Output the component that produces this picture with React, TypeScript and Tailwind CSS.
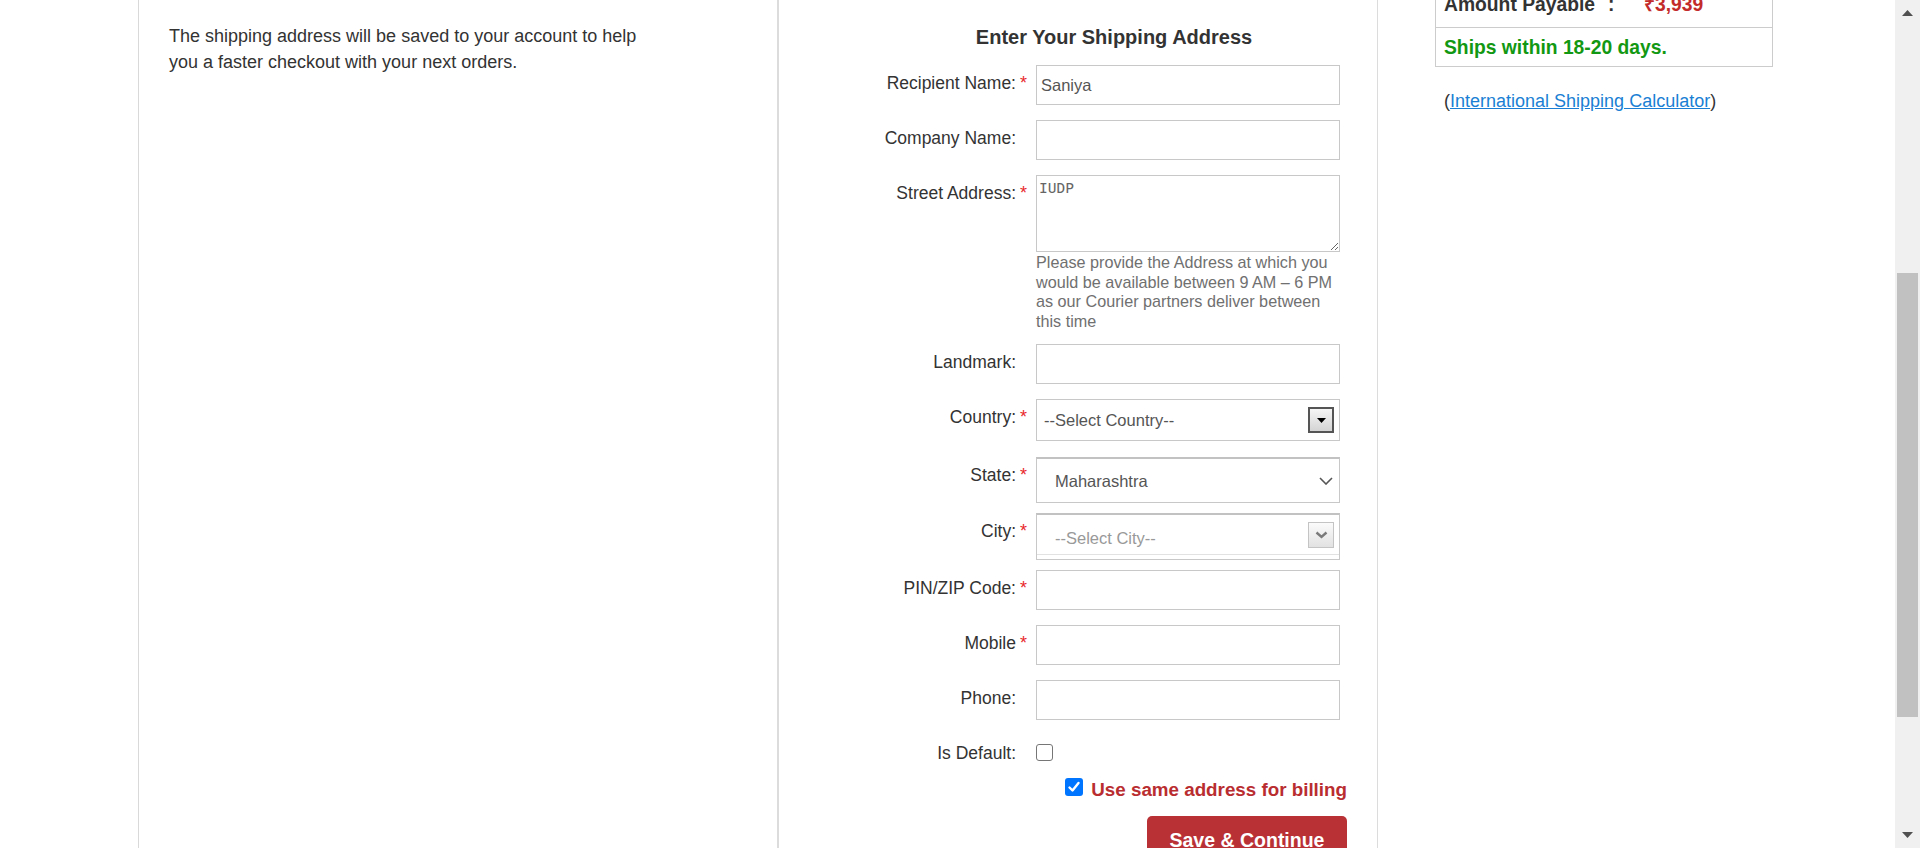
import React from "react";

const Req = () => (
  <span className="text-[#e8282b] text-[18px] leading-[22px]">*</span>
);

function Label({ text, req }: { text: string; req?: boolean }) {
  return (
    <>
      <div className="w-[135px] shrink-0 text-right pt-[7px] text-[17.5px] leading-[22px] text-[#333]">
        {text}
      </div>
      <div className="w-[20px] shrink-0 pl-[4px] pt-[7px] leading-[22px]">{req ? <Req /> : null}</div>
    </>
  );
}

function TextRow({ label, req, mt, value }: { label: string; req?: boolean; mt: string; value?: string }) {
  return (
    <div className={`flex ${mt}`}>
      <Label text={label} req={req} />
      <input
        defaultValue={value}
        className="h-[40px] w-[304px] border border-[#c8c8c8] bg-white px-[4px] text-[16.5px] text-[#555] outline-none font-['Liberation_Sans',Arial,sans-serif]"
      />
    </div>
  );
}

function Checkbox({ checked }: { checked?: boolean }) {
  if (checked) {
    return (
      <div className="w-[18px] h-[18px] rounded-[3px] bg-[#0075ff] flex items-center justify-center shrink-0">
        <svg width="14" height="14" viewBox="0 0 14 14">
          <path d="M2.5 7.5 L5.5 10.5 L11.5 3" fill="none" stroke="#fff" strokeWidth="2.4" strokeLinecap="round" strokeLinejoin="round" />
        </svg>
      </div>
    );
  }
  return <div className="w-[17px] h-[17px] rounded-[3px] border-[1.5px] border-[#767676] bg-white shrink-0" />;
}

export default function App() {
  return (
    <div className="w-[1920px] h-[848px] overflow-hidden bg-white flex font-['Liberation_Sans',Arial,sans-serif] text-[#333]">
      <div className="flex flex-1 h-full">
        <div className="w-[138px] shrink-0" />
        {/* left panel */}
        <div className="w-[639px] shrink-0 h-full border-l border-[#d9d9d9] pl-[30px] pt-[23px]">
          <p className="text-[18px] leading-[26px] text-[#333] whitespace-nowrap">
            The shipping address will be saved to your account to help
            <br />
            you a faster checkout with your next orders.
          </p>
        </div>
        {/* middle panel */}
        <div className="w-[601px] shrink-0 h-full border-l-2 border-r border-[#dcdcdc]">
          <div className="ml-[102px] w-[466px] flex flex-col">
            <h2 className="pt-[25px] text-center text-[20px] leading-[24px] font-bold text-[#333]">
              Enter Your Shipping Address
            </h2>
            <TextRow label="Recipient Name:" req mt="mt-[16px]" value="Saniya" />
            <TextRow label="Company Name:" mt="mt-[15px]" />
            <div className="flex mt-[15px]">
              <Label text="Street Address:" req />
              <div className="w-[304px] flex flex-col">
                <textarea
                  defaultValue="IUDP"
                  className="h-[77px] w-[304px] border border-[#c8c8c8] bg-white px-[2px] py-[3px] font-['DejaVu_Sans_Mono',monospace] text-[14.5px] leading-[18px] text-[#666] outline-none"
                />
                <div className="h-[78px] pt-[1px] text-[16.2px] leading-[19.5px] text-[#707070] whitespace-nowrap">
                  Please provide the Address at which you
                  <br />
                  would be available between 9 AM – 6 PM
                  <br />
                  as our Courier partners deliver between
                  <br />
                  this time
                </div>
              </div>
            </div>
            <TextRow label="Landmark:" mt="mt-[14px]" />
            {/* Country */}
            <div className="flex mt-[15px]">
              <Label text="Country:" req />
              <div className="h-[42px] w-[304px] border border-[#c8c8c8] bg-white flex items-center justify-between pl-[7px] pr-[5px]">
                <span className="text-[16.5px] text-[#555]">--Select Country--</span>
                <div className="w-[26px] h-[26px] border-2 border-[#555] bg-gradient-to-b from-[#f6f6f6] to-[#d4d4d4] flex items-center justify-center">
                  <svg width="9" height="5" viewBox="0 0 9 5">
                    <polygon points="0,0 9,0 4.5,5" fill="#000" />
                  </svg>
                </div>
              </div>
            </div>
            {/* State */}
            <div className="flex mt-[16px]">
              <Label text="State:" req />
              <div className="h-[46px] w-[304px] border border-[#c8c8c8] border-t-2 border-t-[#c2c2c2] bg-white flex items-center justify-between pl-[18px] pr-[6px]">
                <span className="text-[16.5px] text-[#555] pt-[2px]">Maharashtra</span>
                <svg width="14" height="8" viewBox="0 0 14 8">
                  <polyline points="1,1 7,7 13,1" fill="none" stroke="#555" strokeWidth="1.6" />
                </svg>
              </div>
            </div>
            {/* City */}
            <div className="flex mt-[10px]">
              <Label text="City:" req />
              <div className="h-[47px] w-[304px] border border-[#c8c8c8] border-t-2 border-t-[#c2c2c2] bg-white flex flex-col">
                <div className="h-[39px] flex items-center justify-between pl-[18px] pr-[5px]">
                  <span className="text-[16.5px] text-[#999] pt-[7px]">--Select City--</span>
                  <div className="w-[26px] h-[26px] border border-[#c4c4c4] bg-gradient-to-b from-[#fbfbfb] to-[#e2e2e2] flex items-center justify-center">
                    <svg width="13" height="8" viewBox="0 0 13 8">
                      <polyline points="1.5,1.5 6.5,6 11.5,1.5" fill="none" stroke="#7a7a7a" strokeWidth="2.4" />
                    </svg>
                  </div>
                </div>
                <div className="flex-1 border-t border-[#e2e2e2]" />
              </div>
            </div>
            <TextRow label="PIN/ZIP Code:" req mt="mt-[10px]" />
            <TextRow label="Mobile" req mt="mt-[15px]" />
            <TextRow label="Phone:" mt="mt-[15px]" />
            {/* Is Default */}
            <div className="flex items-center h-[17px] mt-[24px]">
              <div className="w-[135px] shrink-0 text-right text-[17.5px] leading-[22px] text-[#333]">Is Default:</div>
              <div className="w-[20px] shrink-0" />
              <Checkbox />
            </div>
            {/* same address */}
            <div className="flex justify-end items-start gap-[8px] mt-[17px]">
              <Checkbox checked />
              <span className="pt-[1px] text-[18.8px] leading-[22px] font-bold text-[#b92d30] whitespace-nowrap">
                Use same address for billing
              </span>
            </div>
            <div className="flex justify-end mt-[15px]">
              <button className="w-[200px] rounded-[5px] bg-[#b93035] pt-[12px] pb-[12px] text-[19.5px] leading-[24px] font-bold text-white text-center font-['Liberation_Sans',Arial,sans-serif]">
                Save &amp; Continue
              </button>
            </div>
          </div>
        </div>
        {/* right area */}
        <div className="flex-1 h-full">
          <div className="ml-[57px] w-[338px] -mt-[30px] border border-[#cccccc] text-[19.3px] font-bold">
            <div className="h-[57px] flex items-end pl-[8px] pb-[10px] border-b border-[#cccccc] leading-[24px]">
              <span className="w-[164px] text-[#333]">Amount Payable</span>
              <span className="w-[36px] text-[#333]">:</span>
              <span className="text-[#c32b2b]">₹3,939</span>
            </div>
            <div className="h-[38px] flex items-center pl-[8px] pt-[2px] leading-[24px] text-[#129812]">
              Ships within 18-20 days.
            </div>
          </div>
          <div className="ml-[66px] mt-[22px] text-[18px] leading-[24px] text-[#333]">
            (<a className="text-[#1a7fd4] underline">International Shipping Calculator</a>)
          </div>
        </div>
      </div>
      {/* scrollbar */}
      <div className="w-[25px] h-full bg-[#f0f0f0] flex flex-col shrink-0">
        <div className="h-[273px] flex justify-center pt-[10px]">
          <svg width="11" height="6" viewBox="0 0 11 6">
            <polygon points="0,6 11,6 5.5,0" fill="#505050" />
          </svg>
        </div>
        <div className="ml-[2px] w-[21px] h-[444px] bg-[#c1c1c1]" />
        <div className="flex-1 flex justify-center items-end pb-[10px]">
          <svg width="11" height="6" viewBox="0 0 11 6">
            <polygon points="0,0 11,0 5.5,6" fill="#505050" />
          </svg>
        </div>
      </div>
    </div>
  );
}
